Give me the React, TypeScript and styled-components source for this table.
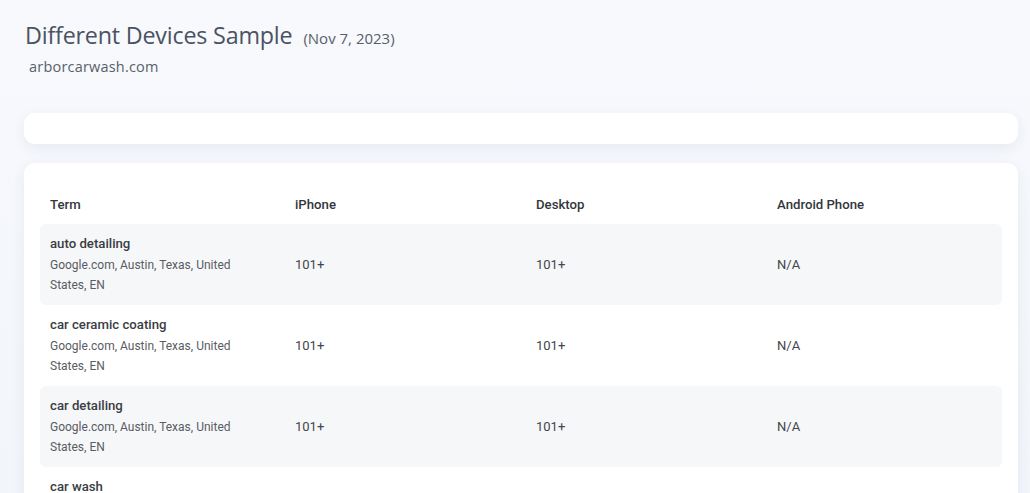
import React from "react";
import styled, { createGlobalStyle } from "styled-components";

const Global = createGlobalStyle`
  html, body { margin: 0; padding: 0; }
  body {
    background: linear-gradient(180deg, #f7f9fd 0%, #f2f5fa 100%);
    font-family: Roboto, "Liberation Sans", sans-serif;
    min-height: 493px;
    overflow: hidden;
  }
`;

const Page = styled.div`
  padding: 21px 12px 0 24px;
  display: flex;
  flex-direction: column;
`;

const Header = styled.div`
  display: flex;
  flex-direction: column;
  gap: 8px;
  padding-left: 1px;
`;

const TitleRow = styled.div`
  display: flex;
  align-items: baseline;
  gap: 11px;
`;

const Title = styled.h1`
  margin: 0;
  font-family: "Open Sans", "Noto Sans", sans-serif;
  font-weight: 400;
  font-size: 23.3px;
  line-height: 28px;
  color: #4b5262;
  letter-spacing: -0.2px;
`;

const DateText = styled.span`
  font-family: "Open Sans", "Noto Sans", sans-serif;
  font-size: 15px;
  color: #5a5f6a;
`;

const Domain = styled.div`
  font-family: "Open Sans", "Noto Sans", sans-serif;
  font-size: 14.5px;
  color: #5a5f6a;
  padding-left: 4px;
  letter-spacing: 0.2px;
`;

const Card = styled.div<{ $h?: number }>`
  background: #ffffff;
  border-radius: 11px;
  box-shadow: 0 4px 14px rgba(40, 60, 100, 0.07);
  ${(p) => (p.$h ? `height: ${p.$h}px;` : "")}
`;

const FilterCard = styled(Card)`
  margin-top: 37px;
`;

const TableCard = styled(Card)`
  margin-top: 19px;
  padding: 26px 16px 0 16px;
  min-height: 340px;
`;

const Grid = styled.div`
  display: grid;
  grid-template-columns: 245px 241px 241px 1fr;
`;

const HeadRow = styled(Grid)`
  height: 30px;
  align-items: center;
  padding-bottom: 5px;
`;

const HeadCell = styled.div`
  padding-left: 10px;
  font-size: 13.2px;
  font-weight: 500;
  color: #33363c;
`;

const Row = styled(Grid)<{ $shaded: boolean }>`
  height: 81px;
  align-items: center;
  border-radius: 6px;
  background: ${(p) => (p.$shaded ? "#f6f7f9" : "transparent")};
`;

const TermCell = styled.div`
  padding-left: 10px;
  display: flex;
  flex-direction: column;
  align-self: center;
  padding-top: 1px;
`;

const TermName = styled.div`
  font-size: 13.2px;
  font-weight: 500;
  color: #3a3d43;
  line-height: 18px;
  margin-bottom: 2px;
`;

const TermMeta = styled.div`
  font-size: 12px;
  color: #595c63;
  line-height: 20.5px;
  max-width: 200px;
`;

const ValueCell = styled.div`
  padding-left: 10px;
  font-size: 13px;
  color: #42454c;
`;

const rows = [
  { term: "auto detailing", iphone: "101+", desktop: "101+", android: "N/A" },
  { term: "car ceramic coating", iphone: "101+", desktop: "101+", android: "N/A" },
  { term: "car detailing", iphone: "101+", desktop: "101+", android: "N/A" },
  { term: "car wash", iphone: "101+", desktop: "101+", android: "N/A" },
];

export default function App() {
  return (
    <>
      <Global />
      <Page>
        <Header>
          <TitleRow>
            <Title>Different Devices Sample</Title>
            <DateText>(Nov 7, 2023)</DateText>
          </TitleRow>
          <Domain>arborcarwash.com</Domain>
        </Header>
        <FilterCard $h={31} />
        <TableCard>
          <HeadRow>
            <HeadCell>Term</HeadCell>
            <HeadCell>iPhone</HeadCell>
            <HeadCell>Desktop</HeadCell>
            <HeadCell>Android Phone</HeadCell>
          </HeadRow>
          {rows.map((r, i) => (
            <Row key={r.term} $shaded={i % 2 === 0}>
              <TermCell>
                <TermName>{r.term}</TermName>
                <TermMeta>Google.com, Austin, Texas, United States, EN</TermMeta>
              </TermCell>
              <ValueCell>{r.iphone}</ValueCell>
              <ValueCell>{r.desktop}</ValueCell>
              <ValueCell>{r.android}</ValueCell>
            </Row>
          ))}
        </TableCard>
      </Page>
    </>
  );
}
